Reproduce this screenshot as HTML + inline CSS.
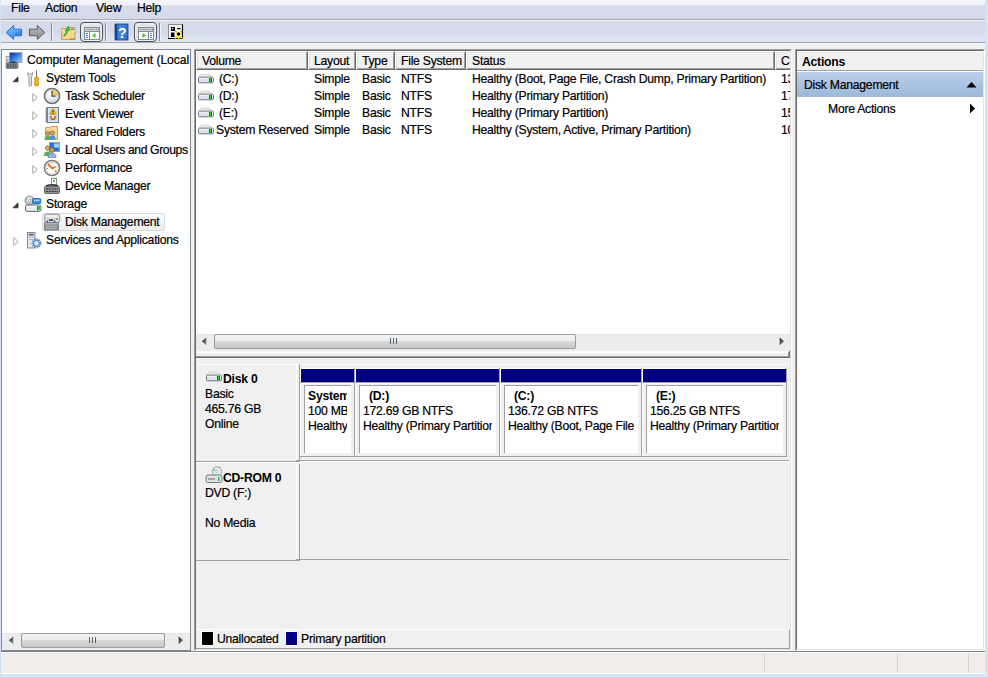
<!DOCTYPE html>
<html><head><meta charset="utf-8">
<style>
*{margin:0;padding:0;box-sizing:border-box}
html,body{width:988px;height:677px;overflow:hidden}
body{position:relative;background:#d6e3f3;font-family:"Liberation Sans",sans-serif;font-size:12.2px;letter-spacing:-0.25px;color:#000}
.a{position:absolute}
.t{position:absolute;white-space:nowrap;line-height:14px;-webkit-text-stroke:0.2px #000}
.b{font-weight:bold;-webkit-text-stroke:0}
</style></head><body>

<!-- menu bar -->
<div class="a" style="left:1px;top:0;width:984px;height:19px;background:linear-gradient(#f5f6fb 0,#eff1f8 5px,#d7dcec 6px,#d5daeb 19px)"></div>
<div class="a" style="left:1px;top:19px;width:984px;height:1px;background:#a9abb0"></div>
<div class="a" style="left:1px;top:20px;width:984px;height:1px;background:#f4f6fb"></div>
<div class="t" style="left:11px;top:1px">File</div>
<div class="t" style="left:45px;top:1px">Action</div>
<div class="t" style="left:96px;top:1px">View</div>
<div class="t" style="left:137px;top:1px">Help</div>

<!-- toolbar -->
<div class="a" style="left:1px;top:21px;width:984px;height:21px;background:linear-gradient(#d6dbec,#d5daeb 55%,#dde1f1 75%,#dfe3f2)"></div>
<div class="a" style="left:1px;top:42px;width:984px;height:1px;background:#a3abbd"></div>
<div class="a" style="left:1px;top:43px;width:984px;height:608px;background:#f0f0f0"></div>


<!-- back -->
<svg class="a" style="left:5px;top:24px" width="18" height="17" viewBox="0 0 18 17">
<defs><linearGradient id="gb" x1="0" y1="0" x2="0" y2="1"><stop offset="0" stop-color="#7cc0fa"/><stop offset="1" stop-color="#3d8fe8"/></linearGradient></defs>
<path d="M1.2 8.5 L8.7 1.5 L8.7 5.2 L16.6 5.2 L16.6 11.8 L8.7 11.8 L8.7 15.3 Z" fill="url(#gb)" stroke="#1e6fd6" stroke-width="1" stroke-linejoin="round"/>
<path d="M10 8.5 L16 6.5 L16 11 L10 11 Z" fill="#2f7fd8" opacity=".7"/>
</svg>
<!-- forward -->
<svg class="a" style="left:28px;top:24px" width="18" height="17" viewBox="0 0 18 17">
<defs><linearGradient id="gf" x1="0" y1="0" x2="0" y2="1"><stop offset="0" stop-color="#b9b9b9"/><stop offset="1" stop-color="#8c8c8c"/></linearGradient></defs>
<path d="M16.8 8.5 L9.3 1.5 L9.3 5.2 L1.4 5.2 L1.4 11.8 L9.3 11.8 L9.3 15.3 Z" fill="url(#gf)" stroke="#5a5a5a" stroke-width="1" stroke-linejoin="round"/>
</svg>
<div class="a" style="left:51px;top:23px;width:1px;height:18px;background:#838b98"></div>
<div class="a" style="left:52px;top:23px;width:1px;height:18px;background:#eef1f8"></div>
<!-- folder up -->
<svg class="a" style="left:60px;top:25px" width="17" height="16" viewBox="0 0 17 16">
<path d="M1.5 3.5 L6 3.5 L7 2.5 L15 2.5 L15 14.5 L1.5 14.5 Z" fill="#f7d58f" stroke="#c9a155" stroke-width="1"/>
<path d="M1.5 6 L15 6" stroke="#fbe6b8" stroke-width="1"/>
<rect x="11" y="3.5" width="3" height="1.5" fill="#3d8fe0"/>
<path d="M3.5 11 L6.5 7 L5 6 L8.5 1 L10 5.5 L8.5 5.5 L5 11 Z" fill="#3fbf3f" stroke="#2a9a2a" stroke-width=".6"/>
<rect x="10" y="13.5" width="5" height="1" fill="#a07a30"/>
</svg>
<!-- pressed button 1 -->
<div class="a" style="left:80px;top:22px;width:23px;height:20px;border:1.5px solid #4f535a;border-radius:4px;background:linear-gradient(#e6e9f0,#dadee7);box-shadow:inset 0 0 0 1px #eef0f5"></div>
<svg class="a" style="left:84px;top:27px" width="16" height="13" viewBox="0 0 16 13">
<rect x=".5" y=".5" width="15" height="12" fill="#fafafa" stroke="#8a8a8a"/>
<rect x="1" y="1" width="14" height="3" fill="#d0d4da"/>
<rect x="2" y="2" width="9" height="1" fill="#9aa0a8"/><rect x="12" y="2" width="1" height="1" fill="#777"/><rect x="14" y="2" width="1" height="1" fill="#777"/>
<rect x="1" y="4" width="14" height="1" fill="#8a8a8a"/>
<rect x="5" y="5" width="1" height="7" fill="#8a8a8a"/>
<rect x="2" y="6" width="2" height="1" fill="#3a8ae0"/><rect x="2" y="8" width="2" height="1" fill="#3a8ae0"/><rect x="2" y="10" width="2" height="1" fill="#3a8ae0"/>
<path d="M8 8.5 L11.5 6 L11.5 11 Z" fill="#3ec23e"/>
</svg>
<div class="a" style="left:105px;top:23px;width:1px;height:18px;background:#838b98"></div>
<div class="a" style="left:106px;top:23px;width:1px;height:18px;background:#eef1f8"></div>
<!-- help -->
<svg class="a" style="left:114px;top:23px" width="15" height="18" viewBox="0 0 15 18">
<defs><linearGradient id="gh" x1="0" y1="0" x2="1" y2="0"><stop offset="0" stop-color="#1c4fa8"/><stop offset=".4" stop-color="#4b8be0"/><stop offset="1" stop-color="#2f6fd0"/></linearGradient></defs>
<rect x="1" y="1" width="13" height="16" fill="url(#gh)" stroke="#173f8a" stroke-width=".8"/>
<rect x="1" y="1" width="2" height="16" fill="#173f8a"/>
<text x="8.2" y="14.5" font-family="Liberation Sans" font-size="14" font-weight="bold" fill="#fff" text-anchor="middle">?</text>
</svg>
<!-- pressed button 2 -->
<div class="a" style="left:134px;top:22px;width:23px;height:20px;border:1.5px solid #4f535a;border-radius:4px;background:linear-gradient(#e6e9f0,#dadee7);box-shadow:inset 0 0 0 1px #eef0f5"></div>
<svg class="a" style="left:138px;top:27px" width="16" height="13" viewBox="0 0 16 13">
<rect x=".5" y=".5" width="15" height="12" fill="#fafafa" stroke="#8a8a8a"/>
<rect x="1" y="1" width="14" height="3" fill="#d0d4da"/>
<rect x="2" y="2" width="9" height="1" fill="#9aa0a8"/><rect x="12" y="2" width="1" height="1" fill="#777"/><rect x="14" y="2" width="1" height="1" fill="#777"/>
<rect x="1" y="4" width="14" height="1" fill="#8a8a8a"/>
<rect x="10" y="5" width="1" height="7" fill="#8a8a8a"/>
<rect x="12" y="6" width="2" height="1" fill="#3a8ae0"/><rect x="12" y="8" width="2" height="1" fill="#3a8ae0"/><rect x="12" y="10" width="2" height="1" fill="#3a8ae0"/>
<path d="M4.5 6 L8 8.5 L4.5 11 Z" fill="#3ec23e"/>
</svg>
<div class="a" style="left:159px;top:23px;width:1px;height:18px;background:#838b98"></div>
<div class="a" style="left:160px;top:23px;width:1px;height:18px;background:#eef1f8"></div>
<!-- properties -->
<svg class="a" style="left:167px;top:23px" width="18" height="18" viewBox="0 0 18 18">
<rect x="1.5" y="1.5" width="14" height="14" fill="#fff" stroke="#8c8c8c"/>
<path d="M1 15.5 H16 M15.5 1.5 V16" stroke="#000" stroke-width="1.1"/>
<rect x="3" y="3" width="11" height="11" fill="none" stroke="#d2d2d2" stroke-width=".8"/>
<rect x="4" y="4" width="4" height="4" fill="#000"/><rect x="5" y="5" width="1.2" height="1.2" fill="#fff"/>
<rect x="10" y="5" width="3.5" height="1.3" fill="#000"/>
<rect x="4" y="9.5" width="3.5" height="4.5" fill="#000"/>
<circle cx="11.5" cy="11" r="1.8" fill="#000"/>
<path d="M8.3 8 L10.3 10 M15 8 L13 10 M11.5 13 V17 M8 15.5 L10.3 13 M15.5 15.5 L13 13" stroke="#f5e020" stroke-width="1.4"/>
<path d="M8.3 8 L9.3 9 M15 8 L14 9" stroke="#b08a20" stroke-width="1.4"/>
</svg>


<!-- left tree panel -->
<div class="a" style="left:1px;top:49px;width:190px;height:602px;border:1px solid #828790;background:#fff"></div>
<div class="a" style="left:2px;top:50px;width:188px;height:600px;overflow:hidden"><div class="a" style="left:-2px;top:-50px;width:988px;height:677px">
<svg class="a" style="left:5px;top:51px" width="18" height="18" viewBox="0 0 18 18">
<defs><linearGradient id="gscr" x1="0" y1="0" x2="1" y2="1"><stop offset="0" stop-color="#0a2a9a"/><stop offset=".45" stop-color="#2f7ae0"/><stop offset="1" stop-color="#9fd4f8"/></linearGradient></defs>
<rect x="4.5" y="1.5" width="12.5" height="10" fill="url(#gscr)" stroke="#a4a8ae" stroke-width="1"/>
<rect x="1" y="5.5" width="3.5" height="6" fill="#d4d8dc" stroke="#8a8e94" stroke-width=".7"/>
<rect x="2" y="8.5" width="1.3" height="1.3" fill="#3c3"/>
<path d="M4 12.5 Q8 10.3 11.5 12" stroke="#2a2a2a" stroke-width="1.4" fill="none"/>
<rect x="1" y="12" width="12" height="5.5" rx=".8" fill="#8a8e94" stroke="#5a5e64" stroke-width=".6"/>
<path d="M2.2 14 H12 M2.2 16 H12" stroke="#222" stroke-width=".9" stroke-dasharray="1.6 .9"/>
</svg><div class="t" style="left:27px;top:53px;letter-spacing:-0.1px">Computer Management (Local</div>
<svg class="a" style="left:12px;top:76px" width="7" height="7" viewBox="0 0 7 7"><path d="M6 0.8 L6 5.8 L1 5.8 Z" fill="#3a3a3a" stroke="#2a2a2a" stroke-width=".7" stroke-linejoin="round"/></svg>
<svg class="a" style="left:26px;top:70px" width="14" height="17" viewBox="0 0 14 17">
<path d="M2 2.5 Q1 5 3 6.5 L3 15.5 Q4.2 16.5 5.4 15.5 L5.4 6.5 Q7.5 5 6.5 2.5 L5.4 4 L3.5 4 Z" fill="#eaeaea" stroke="#8a8a8a" stroke-width=".9"/>
<rect x="10" y="0.5" width="1" height="7" fill="#6a6a6a"/>
<path d="M8.6 7.5 H12.4 V10 H11.6 V11 H12.4 V15.5 Q10.5 16.8 8.6 15.5 V11 H9.4 V10 H8.6 Z" fill="#f2b51a" stroke="#c5861a" stroke-width=".7"/>
</svg><div class="t" style="left:46px;top:71px">System Tools</div>
<svg class="a" style="left:32px;top:93px" width="7" height="10" viewBox="0 0 7 10"><path d="M0.8 0.6 L5.2 4.6 L0.8 8.6 Z" fill="#fff" stroke="#a6a6a6" stroke-width="1" stroke-linejoin="miter"/></svg>
<svg class="a" style="left:43px;top:87px" width="18" height="18" viewBox="0 0 18 18">
<defs><radialGradient id="gc" cx=".4" cy=".35" r=".7"><stop offset="0" stop-color="#fff"/><stop offset="1" stop-color="#cdd6e3"/></radialGradient></defs>
<circle cx="9" cy="9" r="7.6" fill="url(#gc)" stroke="#6c7076" stroke-width="1.5"/><circle cx="9" cy="9" r="6.2" fill="none" stroke="#b8bec8" stroke-width=".6" stroke-dasharray=".8 1.2"/>
<path d="M9 9 L9 2.4 A6.6 6.6 0 0 1 15.4 9 Z" fill="#f5c860"/>
<path d="M9 3.8 V9.2 H12.5" stroke="#3e4654" stroke-width="1.2" fill="none"/>
</svg><div class="t" style="left:65px;top:89px">Task Scheduler</div>
<svg class="a" style="left:32px;top:111px" width="7" height="10" viewBox="0 0 7 10"><path d="M0.8 0.6 L5.2 4.6 L0.8 8.6 Z" fill="#fff" stroke="#a6a6a6" stroke-width="1" stroke-linejoin="miter"/></svg>
<svg class="a" style="left:44px;top:106px" width="16" height="17" viewBox="0 0 16 17">
<rect x="3" y="1.5" width="11.5" height="15" fill="#dfe6f3" stroke="#5c6a80" stroke-width=".9"/>
<path d="M5 4 H13 M5 6 H13 M5 8 H13 M5 10 H13 M5 12 H13 M5 14 H13" stroke="#aab6ca" stroke-width=".6"/>
<path d="M1.5 3 H4 M1.5 5 H4 M1.5 7 H4 M1.5 9 H4 M1.5 11 H4 M1.5 13 H4 M1.5 15 H4" stroke="#444c58" stroke-width=".9"/>
<path d="M9 2.2 L12.3 8.3 L5.7 8.3 Z" fill="#f5c518" stroke="#b88a10" stroke-width=".6"/>
<rect x="8.5" y="4.2" width="1" height="2.2" fill="#222"/><rect x="8.5" y="6.9" width="1" height="1" fill="#222"/>
<path d="M6.3 10.5 H11.7 L10.8 13.5 H7.2 Z" fill="#e87a30" stroke="#9a4a1a" stroke-width=".6"/>
<circle cx="9" cy="10.8" r="1.3" fill="#fff2d0"/>
</svg><div class="t" style="left:65px;top:107px">Event Viewer</div>
<svg class="a" style="left:32px;top:129px" width="7" height="10" viewBox="0 0 7 10"><path d="M0.8 0.6 L5.2 4.6 L0.8 8.6 Z" fill="#fff" stroke="#a6a6a6" stroke-width="1" stroke-linejoin="miter"/></svg>
<svg class="a" style="left:43px;top:125px" width="16" height="16" viewBox="0 0 16 16">
<path d="M2.5 2.5 H7 L8 1.5 H14.5 V14.5 H2.5 Z" fill="#f7d68e" stroke="#c9a155" stroke-width="1"/>
<circle cx="5" cy="8.5" r="2" fill="#d9a470" stroke="#6b4a30" stroke-width=".6"/><path d="M1.5 15 Q1.5 11 5 11 Q8.5 11 8.5 15 Z" fill="#52b552"/>
<circle cx="9.5" cy="8" r="2" fill="#d9a470" stroke="#6b4a30" stroke-width=".6"/><path d="M6.5 14.5 Q6.5 10.5 9.5 10.5 Q12.5 10.5 12.5 14.5 Z" fill="#4a90e0"/>
</svg><div class="t" style="left:65px;top:125px">Shared Folders</div>
<svg class="a" style="left:32px;top:147px" width="7" height="10" viewBox="0 0 7 10"><path d="M0.8 0.6 L5.2 4.6 L0.8 8.6 Z" fill="#fff" stroke="#a6a6a6" stroke-width="1" stroke-linejoin="miter"/></svg>
<svg class="a" style="left:43px;top:141px" width="18" height="17" viewBox="0 0 18 17">
<rect x="6.5" y="1.5" width="10" height="9" fill="#2d72d2" stroke="#9aa2ac"/>
<rect x="11" y="2.5" width="5" height="4" fill="#9fd2f8"/>
<circle cx="4.5" cy="7" r="2.2" fill="#e0b060" stroke="#6b4a30" stroke-width=".6"/><path d="M0.8 15 Q0.8 10.5 4.5 10.5 Q7.5 10.5 8 13 V15 Z" fill="#52b552"/>
<circle cx="9" cy="9" r="2.4" fill="#caa070" stroke="#5a3a20" stroke-width=".6"/><path d="M5 16.5 Q5 12 9 12 Q13 12 13 16.5 Z" fill="#8fb4e0" stroke="#5a7aa8" stroke-width=".6"/>
</svg><div class="t" style="left:65px;top:143px;letter-spacing:-0.4px">Local Users and Groups</div>
<svg class="a" style="left:32px;top:165px" width="7" height="10" viewBox="0 0 7 10"><path d="M0.8 0.6 L5.2 4.6 L0.8 8.6 Z" fill="#fff" stroke="#a6a6a6" stroke-width="1" stroke-linejoin="miter"/></svg>
<svg class="a" style="left:43px;top:159px" width="18" height="18" viewBox="0 0 18 18">
<circle cx="9" cy="9" r="7.6" fill="#fafafa" stroke="#7c7c7c" stroke-width="1.5"/>
<circle cx="9" cy="9" r="5.8" fill="none" stroke="#d8d8d8" stroke-width=".8"/>
<path d="M5 5 L9.5 9.5 L12.5 7.5" stroke="#e8741a" stroke-width="2" fill="none"/>
<path d="M12 11.5 L13.5 13" stroke="#e8741a" stroke-width="1.5"/>
<path d="M3.5 9.5 H5 M9 3.5 V4.5" stroke="#777" stroke-width=".8"/>
</svg><div class="t" style="left:65px;top:161px">Performance</div>
<svg class="a" style="left:43px;top:177px" width="18" height="18" viewBox="0 0 18 18">
<rect x="8.5" y="1.5" width="5" height="7" fill="#fff" stroke="#8a8a8a"/>
<rect x="10" y="3" width="2" height="2" fill="#4ac04a"/>
<path d="M3 9 Q9 6.5 15 9" stroke="#333" stroke-width="1.6" fill="none"/>
<rect x="1.5" y="9.5" width="15" height="7" rx="1" fill="#8e9298" stroke="#4e5258" stroke-width=".8"/>
<path d="M3 12 H15 M3 14.5 H15" stroke="#2a2a2a" stroke-width=".9" stroke-dasharray="2 .8"/>
</svg><div class="t" style="left:65px;top:179px">Device Manager</div>
<svg class="a" style="left:12px;top:202px" width="7" height="7" viewBox="0 0 7 7"><path d="M6 0.8 L6 5.8 L1 5.8 Z" fill="#3a3a3a" stroke="#2a2a2a" stroke-width=".7" stroke-linejoin="round"/></svg>
<svg class="a" style="left:24px;top:195px" width="18" height="18" viewBox="0 0 18 18">
<defs><radialGradient id="gdisc" cx=".45" cy=".4" r=".6"><stop offset="0" stop-color="#f4f4f4"/><stop offset="1" stop-color="#a8acb2"/></radialGradient></defs>
<circle cx="5.5" cy="5.5" r="4.6" fill="url(#gdisc)" stroke="#7c8086" stroke-width=".7"/>
<circle cx="5.5" cy="5.5" r="1.1" fill="#fff" stroke="#777" stroke-width=".5"/>
<rect x="1.6" y="3.6" width="1.2" height="1.2" fill="#4c4"/>
<rect x="8.6" y="3.5" width="8.2" height="5.2" rx="1.2" fill="#2f86e8" stroke="#1656b0" stroke-width=".7"/>
<rect x="10" y="4.6" width="5.5" height="1.6" fill="#9cd0fa"/>
<rect x="1.5" y="10" width="15.4" height="6.4" rx="1.6" fill="#e6eaf2" stroke="#62666e" stroke-width="1"/>
<rect x="2.4" y="10.9" width="13.6" height="1" fill="#fafbfd"/>
<rect x="13" y="11.2" width="2.6" height="4" fill="#3a3e48"/><rect x="13.6" y="11.4" width="1.4" height="3.6" fill="#28e028"/>
</svg><div class="t" style="left:46px;top:197px">Storage</div>
<div class="a" style="left:42px;top:213px;width:123px;height:18px;border:1px solid #d9d9d9;border-radius:2px;background:linear-gradient(#fafafa,#ececec)"></div>
<svg class="a" style="left:44px;top:213px" width="17" height="18" viewBox="0 0 17 18">
<rect x=".7" y="1.2" width="15" height="8.3" rx="2" fill="#dde1e6" stroke="#7e838a" stroke-width=".9"/>
<rect x="2.2" y="2.4" width="11" height="1.3" fill="#fafafa"/>
<rect x="4.8" y="6.4" width="4.6" height="1.3" fill="#111"/>
<circle cx="3.4" cy="8.3" r=".85" fill="#1a3fc0"/><circle cx="10.6" cy="8.3" r=".85" fill="#1a3fc0"/>
<rect x="12" y="5.2" width="1.6" height="1.6" fill="#36c436" stroke="#c08040" stroke-width=".4"/>
<rect x=".7" y="10" width="13.6" height="7" fill="#8d9198" stroke="#5d6168" stroke-width=".7"/>
<rect x="1.5" y="10.3" width="12" height="1" fill="#c8ccd2"/>
<path d="M2.2 13.3 H13 M2.2 15.6 H13" stroke="#e2e2e2" stroke-width=".8" stroke-dasharray="1.4 .7"/>
</svg><div class="t" style="left:65px;top:215px">Disk Management</div>
<svg class="a" style="left:13px;top:237px" width="7" height="10" viewBox="0 0 7 10"><path d="M0.8 0.6 L5.2 4.6 L0.8 8.6 Z" fill="#fff" stroke="#a6a6a6" stroke-width="1" stroke-linejoin="miter"/></svg>
<svg class="a" style="left:26px;top:231px" width="16" height="18" viewBox="0 0 16 18">
<rect x="1.5" y="1.5" width="7.5" height="15.5" fill="#e4e7ec" stroke="#7a7e86" stroke-width=".9"/>
<rect x="2.8" y="2.8" width="5" height="1.6" fill="#4a5a78"/><rect x="2.8" y="5.5" width="5" height="1" fill="#b0b4ba"/><rect x="2.8" y="8" width="5" height="1" fill="#b0b4ba"/>
<circle cx="10.5" cy="12.3" r="4.2" fill="none" stroke="#5a90d0" stroke-width="1.8" stroke-dasharray="1.4 1"/>
<circle cx="10.5" cy="12.3" r="3.2" fill="#a8c8ee" stroke="#3a6ab0" stroke-width=".7"/>
<circle cx="10.5" cy="12.3" r="1.3" fill="#fff"/>
</svg><div class="t" style="left:46px;top:233px">Services and Applications</div>
</div></div>
<div class="a" style="left:2px;top:633px;width:188px;height:17px;background:#ececec;border-top:1px solid #e4e4e4"></div>
<svg class="a" style="left:8px;top:636px" width="7" height="9" viewBox="0 0 7 9"><defs><linearGradient id="gal" x1="0" y1="0" x2="1" y2="1"><stop offset="0" stop-color="#1a1a1a"/><stop offset="1" stop-color="#9aa0a8"/></linearGradient></defs><path d="M5.3 0.6 L0.8 4.3 L5.3 8.2 Z" fill="url(#gal)"/></svg>
<div class="a" style="left:21px;top:633px;width:144px;height:15px;border:1px solid #9a9a9a;border-radius:2px;background:linear-gradient(#f4f4f4 0,#ececec 45%,#d9d9d9 50%,#c8c8c8 100%)"></div>
<div class="a" style="left:89px;top:637px;width:1px;height:6px;background:#56606e"></div>
<div class="a" style="left:92px;top:637px;width:1px;height:6px;background:#56606e"></div>
<div class="a" style="left:95px;top:637px;width:1px;height:6px;background:#56606e"></div>
<svg class="a" style="left:177px;top:636px" width="7" height="9" viewBox="0 0 7 9"><defs><linearGradient id="gar" x1="0" y1="0" x2="1" y2="1"><stop offset="0" stop-color="#1a1a1a"/><stop offset="1" stop-color="#9aa0a8"/></linearGradient></defs><path d="M1.7 0.6 L6.2 4.3 L1.7 8.2 Z" fill="url(#gar)"/></svg>

<!-- middle panel -->
<div class="a" style="left:194px;top:49px;width:598px;height:602px;border-left:1px solid #a0a0a0;border-top:1px solid #a0a0a0;border-right:1px solid #fff;border-bottom:1px solid #fff"></div>
<div class="a" style="left:195px;top:50px;width:596px;height:600px;border-left:1px solid #696969;border-top:1px solid #696969;border-right:1px solid #e3e3e3;border-bottom:1px solid #e3e3e3;background:#f0f0f0"></div>
<div class="a" style="left:196px;top:51px;width:594px;height:19px;overflow:hidden"><div class="a" style="left:0px;top:0;width:112px;height:19px;background:#f0f0f0;border-left:1px solid #fff;border-top:1px solid #fff;border-right:1px solid #696969;border-bottom:1px solid #696969"><div class="a" style="left:0;top:0;right:0;bottom:0;border-left:1px solid #e3e3e3;border-top:1px solid #e3e3e3;border-right:1px solid #a0a0a0;border-bottom:1px solid #a0a0a0"></div><div class="t" style="left:5px;top:2px">Volume</div></div><div class="a" style="left:112px;top:0;width:48px;height:19px;background:#f0f0f0;border-left:1px solid #fff;border-top:1px solid #fff;border-right:1px solid #696969;border-bottom:1px solid #696969"><div class="a" style="left:0;top:0;right:0;bottom:0;border-left:1px solid #e3e3e3;border-top:1px solid #e3e3e3;border-right:1px solid #a0a0a0;border-bottom:1px solid #a0a0a0"></div><div class="t" style="left:5px;top:2px">Layout</div></div><div class="a" style="left:160px;top:0;width:39px;height:19px;background:#f0f0f0;border-left:1px solid #fff;border-top:1px solid #fff;border-right:1px solid #696969;border-bottom:1px solid #696969"><div class="a" style="left:0;top:0;right:0;bottom:0;border-left:1px solid #e3e3e3;border-top:1px solid #e3e3e3;border-right:1px solid #a0a0a0;border-bottom:1px solid #a0a0a0"></div><div class="t" style="left:5px;top:2px">Type</div></div><div class="a" style="left:199px;top:0;width:71px;height:19px;background:#f0f0f0;border-left:1px solid #fff;border-top:1px solid #fff;border-right:1px solid #696969;border-bottom:1px solid #696969"><div class="a" style="left:0;top:0;right:0;bottom:0;border-left:1px solid #e3e3e3;border-top:1px solid #e3e3e3;border-right:1px solid #a0a0a0;border-bottom:1px solid #a0a0a0"></div><div class="t" style="left:5px;top:2px">File System</div></div><div class="a" style="left:270px;top:0;width:309px;height:19px;background:#f0f0f0;border-left:1px solid #fff;border-top:1px solid #fff;border-right:1px solid #696969;border-bottom:1px solid #696969"><div class="a" style="left:0;top:0;right:0;bottom:0;border-left:1px solid #e3e3e3;border-top:1px solid #e3e3e3;border-right:1px solid #a0a0a0;border-bottom:1px solid #a0a0a0"></div><div class="t" style="left:5px;top:2px">Status</div></div><div class="a" style="left:579px;top:0;width:66px;height:19px;background:#f0f0f0;border-left:1px solid #fff;border-top:1px solid #fff;border-right:1px solid #696969;border-bottom:1px solid #696969"><div class="a" style="left:0;top:0;right:0;bottom:0;border-left:1px solid #e3e3e3;border-top:1px solid #e3e3e3;border-right:1px solid #a0a0a0;border-bottom:1px solid #a0a0a0"></div><div class="t" style="left:5px;top:2px">C</div></div></div>
<div class="a" style="left:196px;top:70px;width:594px;height:264px;background:#fff;overflow:hidden">
<svg class="a" style="left:1px;top:3px" width="17" height="11" viewBox="0 0 17 11"><path d="M4.5 1.2 H12.5 L15.5 4.2 H1.5 Z" fill="#ececec" stroke="#c4c4c4" stroke-width=".7"/><rect x="1.5" y="4.2" width="15" height="5.6" rx="1.2" fill="#dde2f1" stroke="#6d727c" stroke-width="1"/><rect x="2.2" y="4.8" width="13.6" height="1" fill="#f4f6fa"/><rect x="12" y="5" width="3" height="4" fill="#3a3e48"/><rect x="12.8" y="5.2" width="1.4" height="3.6" fill="#28e028"/></svg><div class="t" style="left:23px;top:2px">(C:)</div><div class="t" style="left:118px;top:2px">Simple</div><div class="t" style="left:166px;top:2px">Basic</div><div class="t" style="left:205px;top:2px">NTFS</div><div class="t" style="left:276px;top:2px">Healthy (Boot, Page File, Crash Dump, Primary Partition)</div><div class="t" style="left:585px;top:2px">136</div>
<svg class="a" style="left:1px;top:20px" width="17" height="11" viewBox="0 0 17 11"><path d="M4.5 1.2 H12.5 L15.5 4.2 H1.5 Z" fill="#ececec" stroke="#c4c4c4" stroke-width=".7"/><rect x="1.5" y="4.2" width="15" height="5.6" rx="1.2" fill="#dde2f1" stroke="#6d727c" stroke-width="1"/><rect x="2.2" y="4.8" width="13.6" height="1" fill="#f4f6fa"/><rect x="12" y="5" width="3" height="4" fill="#3a3e48"/><rect x="12.8" y="5.2" width="1.4" height="3.6" fill="#28e028"/></svg><div class="t" style="left:23px;top:19px">(D:)</div><div class="t" style="left:118px;top:19px">Simple</div><div class="t" style="left:166px;top:19px">Basic</div><div class="t" style="left:205px;top:19px">NTFS</div><div class="t" style="left:276px;top:19px">Healthy (Primary Partition)</div><div class="t" style="left:585px;top:19px">172</div>
<svg class="a" style="left:1px;top:37px" width="17" height="11" viewBox="0 0 17 11"><path d="M4.5 1.2 H12.5 L15.5 4.2 H1.5 Z" fill="#ececec" stroke="#c4c4c4" stroke-width=".7"/><rect x="1.5" y="4.2" width="15" height="5.6" rx="1.2" fill="#dde2f1" stroke="#6d727c" stroke-width="1"/><rect x="2.2" y="4.8" width="13.6" height="1" fill="#f4f6fa"/><rect x="12" y="5" width="3" height="4" fill="#3a3e48"/><rect x="12.8" y="5.2" width="1.4" height="3.6" fill="#28e028"/></svg><div class="t" style="left:23px;top:36px">(E:)</div><div class="t" style="left:118px;top:36px">Simple</div><div class="t" style="left:166px;top:36px">Basic</div><div class="t" style="left:205px;top:36px">NTFS</div><div class="t" style="left:276px;top:36px">Healthy (Primary Partition)</div><div class="t" style="left:585px;top:36px">156</div>
<svg class="a" style="left:1px;top:54px" width="17" height="11" viewBox="0 0 17 11"><path d="M4.5 1.2 H12.5 L15.5 4.2 H1.5 Z" fill="#ececec" stroke="#c4c4c4" stroke-width=".7"/><rect x="1.5" y="4.2" width="15" height="5.6" rx="1.2" fill="#dde2f1" stroke="#6d727c" stroke-width="1"/><rect x="2.2" y="4.8" width="13.6" height="1" fill="#f4f6fa"/><rect x="12" y="5" width="3" height="4" fill="#3a3e48"/><rect x="12.8" y="5.2" width="1.4" height="3.6" fill="#28e028"/></svg><div class="t" style="left:20px;top:53px">System Reserved</div><div class="t" style="left:118px;top:53px">Simple</div><div class="t" style="left:166px;top:53px">Basic</div><div class="t" style="left:205px;top:53px">NTFS</div><div class="t" style="left:276px;top:53px">Healthy (System, Active, Primary Partition)</div><div class="t" style="left:585px;top:53px">100</div>
</div>
<div class="a" style="left:196px;top:334px;width:594px;height:17px;background:#ececec;border-top:1px solid #e4e4e4"></div>
<svg class="a" style="left:201px;top:337px" width="7" height="9" viewBox="0 0 7 9"><defs><linearGradient id="gal" x1="0" y1="0" x2="1" y2="1"><stop offset="0" stop-color="#1a1a1a"/><stop offset="1" stop-color="#9aa0a8"/></linearGradient></defs><path d="M5.3 0.6 L0.8 4.3 L5.3 8.2 Z" fill="url(#gal)"/></svg>
<div class="a" style="left:214px;top:334px;width:362px;height:15px;border:1px solid #9a9a9a;border-radius:2px;background:linear-gradient(#f4f4f4 0,#ececec 45%,#d9d9d9 50%,#c8c8c8 100%)"></div>
<div class="a" style="left:390px;top:338px;width:1px;height:6px;background:#56606e"></div>
<div class="a" style="left:393px;top:338px;width:1px;height:6px;background:#56606e"></div>
<div class="a" style="left:396px;top:338px;width:1px;height:6px;background:#56606e"></div>
<svg class="a" style="left:778px;top:337px" width="7" height="9" viewBox="0 0 7 9"><defs><linearGradient id="gar" x1="0" y1="0" x2="1" y2="1"><stop offset="0" stop-color="#1a1a1a"/><stop offset="1" stop-color="#9aa0a8"/></linearGradient></defs><path d="M1.7 0.6 L6.2 4.3 L1.7 8.2 Z" fill="url(#gar)"/></svg>
<div class="a" style="left:196px;top:351px;width:594px;height:1px;background:#f8f8f8"></div>
<div class="a" style="left:196px;top:352px;width:594px;height:1px;background:#fff"></div>

<div class="a" style="left:196px;top:356px;width:594px;height:1px;background:#a0a0a0"></div>
<div class="a" style="left:196px;top:357px;width:594px;height:1px;background:#696969"></div>
<div class="a" style="left:788px;top:352px;width:1px;height:5px;background:#a0a0a0"></div>
<div class="a" style="left:789px;top:351px;width:1px;height:6px;background:#696969"></div>
<div class="a" style="left:196px;top:358px;width:594px;height:1px;background:#f8f8f8"></div>
<div class="a" style="left:197px;top:364px;width:592px;height:1px;background:#fff"></div>
<div class="a" style="left:296px;top:364px;width:1px;height:96px;background:#fff"></div>
<div class="a" style="left:299px;top:364px;width:1px;height:98px;background:#a0a0a0"></div>
<div class="a" style="left:196px;top:461px;width:104px;height:1px;background:#a0a0a0"></div>
<div class="a" style="left:197px;top:462px;width:103px;height:1px;background:#fff"></div>
<div class="a" style="left:296px;top:460px;width:493px;height:1px;background:#a0a0a0"></div>
<div class="a" style="left:300px;top:461px;width:489px;height:1px;background:#fff"></div>
<div class="a" style="left:296px;top:464px;width:1px;height:95px;background:#fff"></div>
<div class="a" style="left:299px;top:464px;width:1px;height:97px;background:#a0a0a0"></div>
<div class="a" style="left:196px;top:560px;width:104px;height:1px;background:#a0a0a0"></div>
<div class="a" style="left:296px;top:559px;width:493px;height:1px;background:#a0a0a0"></div>
<div class="a" style="left:300px;top:368px;width:54px;height:1px;background:#fff"></div><div class="a" style="left:300px;top:368px;width:1px;height:88px;background:#fff"></div><div class="a" style="left:301px;top:369px;width:53px;height:13px;background:#000080"></div><div class="a" style="left:300px;top:382px;width:55px;height:1px;background:#a0a0a0"></div><div class="a" style="left:301px;top:383px;width:53px;height:1px;background:#fff"></div><div class="a" style="left:354px;top:368px;width:1px;height:89px;background:#a0a0a0"></div><div class="a" style="left:300px;top:456px;width:55px;height:1px;background:#a0a0a0"></div><div class="a" style="left:304px;top:385px;width:47px;height:68px;background:#fff;border-left:1px solid #a0a0a0;border-top:1px solid #a0a0a0;overflow:hidden"><div class="a" style="left:0;top:0;width:42px;height:60px;overflow:hidden"><div class="t b" style="left:3px;top:3px">System</div><div class="t" style="left:3px;top:18px">100 MB</div><div class="t" style="left:3px;top:33px">Healthy</div></div></div>
<div class="a" style="left:355px;top:368px;width:144px;height:1px;background:#fff"></div><div class="a" style="left:355px;top:368px;width:1px;height:88px;background:#fff"></div><div class="a" style="left:356px;top:369px;width:143px;height:13px;background:#000080"></div><div class="a" style="left:355px;top:382px;width:145px;height:1px;background:#a0a0a0"></div><div class="a" style="left:356px;top:383px;width:143px;height:1px;background:#fff"></div><div class="a" style="left:499px;top:368px;width:1px;height:89px;background:#a0a0a0"></div><div class="a" style="left:355px;top:456px;width:145px;height:1px;background:#a0a0a0"></div><div class="a" style="left:359px;top:385px;width:137px;height:68px;background:#fff;border-left:1px solid #a0a0a0;border-top:1px solid #a0a0a0;overflow:hidden"><div class="a" style="left:0;top:0;width:132px;height:60px;overflow:hidden"><div class="t b" style="left:9px;top:3px">(D:)</div><div class="t" style="left:3px;top:18px">172.69 GB NTFS</div><div class="t" style="left:3px;top:33px">Healthy (Primary Partition)</div></div></div>
<div class="a" style="left:500px;top:368px;width:141px;height:1px;background:#fff"></div><div class="a" style="left:500px;top:368px;width:1px;height:88px;background:#fff"></div><div class="a" style="left:501px;top:369px;width:140px;height:13px;background:#000080"></div><div class="a" style="left:500px;top:382px;width:142px;height:1px;background:#a0a0a0"></div><div class="a" style="left:501px;top:383px;width:140px;height:1px;background:#fff"></div><div class="a" style="left:641px;top:368px;width:1px;height:89px;background:#a0a0a0"></div><div class="a" style="left:500px;top:456px;width:142px;height:1px;background:#a0a0a0"></div><div class="a" style="left:504px;top:385px;width:134px;height:68px;background:#fff;border-left:1px solid #a0a0a0;border-top:1px solid #a0a0a0;overflow:hidden"><div class="a" style="left:0;top:0;width:129px;height:60px;overflow:hidden"><div class="t b" style="left:9px;top:3px">(C:)</div><div class="t" style="left:3px;top:18px">136.72 GB NTFS</div><div class="t" style="left:3px;top:33px">Healthy (Boot, Page File, Crash Dump, Primary Partition)</div></div></div>
<div class="a" style="left:642px;top:368px;width:144px;height:1px;background:#fff"></div><div class="a" style="left:642px;top:368px;width:1px;height:88px;background:#fff"></div><div class="a" style="left:643px;top:369px;width:143px;height:13px;background:#000080"></div><div class="a" style="left:642px;top:382px;width:145px;height:1px;background:#a0a0a0"></div><div class="a" style="left:643px;top:383px;width:143px;height:1px;background:#fff"></div><div class="a" style="left:786px;top:368px;width:1px;height:89px;background:#a0a0a0"></div><div class="a" style="left:642px;top:456px;width:145px;height:1px;background:#a0a0a0"></div><div class="a" style="left:646px;top:385px;width:137px;height:68px;background:#fff;border-left:1px solid #a0a0a0;border-top:1px solid #a0a0a0;overflow:hidden"><div class="a" style="left:0;top:0;width:132px;height:60px;overflow:hidden"><div class="t b" style="left:9px;top:3px">(E:)</div><div class="t" style="left:3px;top:18px">156.25 GB NTFS</div><div class="t" style="left:3px;top:33px">Healthy (Primary Partition)</div></div></div>
<svg class="a" style="left:205px;top:371px" width="17" height="11" viewBox="0 0 17 11"><path d="M4.5 1.2 H12.5 L15.5 4.2 H1.5 Z" fill="#ececec" stroke="#c4c4c4" stroke-width=".7"/><rect x="1.5" y="4.2" width="15" height="5.6" rx="1.2" fill="#dde2f1" stroke="#6d727c" stroke-width="1"/><rect x="2.2" y="4.8" width="13.6" height="1" fill="#f4f6fa"/><rect x="12" y="5" width="3" height="4" fill="#3a3e48"/><rect x="12.8" y="5.2" width="1.4" height="3.6" fill="#28e028"/></svg><div class="t b" style="left:223px;top:372px">Disk 0</div><div class="t" style="left:205px;top:387px">Basic</div><div class="t" style="left:205px;top:402px">465.76 GB</div><div class="t" style="left:205px;top:417px">Online</div>
<svg class="a" style="left:205px;top:466px" width="18" height="18" viewBox="0 0 18 18">
<circle cx="12" cy="5.5" r="4.8" fill="#e4e8ee" stroke="#9aa0a8" stroke-width=".8"/>
<circle cx="12" cy="5.5" r="1.3" fill="#fff" stroke="#999" stroke-width=".5"/>
<rect x="8.5" y="3" width="1.5" height="1.5" fill="#3c3"/><rect x="14" y="1" width="1" height="1" fill="#d0d"/>
<path d="M1 11 Q1 9 3 9 L15 9 Q17 9 17 11 L17 15 Q17 16.5 15.5 16.5 L2.5 16.5 Q1 16.5 1 15 Z" fill="#dfe3ea" stroke="#6e7176" stroke-width=".9"/>
<path d="M3 13 H10" stroke="#777" stroke-width="1.2"/><rect x="13" y="11" width="1.5" height="4" fill="#2fc02f"/>
</svg><div class="t b" style="left:223px;top:471px">CD-ROM 0</div><div class="t" style="left:205px;top:486px">DVD (F:)</div><div class="t" style="left:205px;top:516px">No Media</div>
<div class="a" style="left:196px;top:629px;width:594px;height:20px;background:#f0f0f0;border-top:1px solid #fff;border-right:1px solid #a0a0a0;border-bottom:1px solid #a0a0a0"></div>
<div class="a" style="left:201px;top:631px;width:13px;height:15px;border:1px solid #fff;background:#000"></div>
<div class="t" style="left:217px;top:632px">Unallocated</div>
<div class="a" style="left:285px;top:631px;width:13px;height:15px;border:1px solid #fff;background:#000080"></div>
<div class="t" style="left:301px;top:632px">Primary partition</div>


<!-- actions panel -->
<div class="a" style="left:795px;top:49px;width:190px;height:602px;border-left:1px solid #a0a0a0;border-top:1px solid #a0a0a0;border-right:1px solid #fff;border-bottom:1px solid #fff"></div>
<div class="a" style="left:796px;top:50px;width:188px;height:600px;border-left:1px solid #696969;border-top:1px solid #696969;border-right:1px solid #e3e3e3;border-bottom:1px solid #e3e3e3;background:#fff"></div>
<div class="a" style="left:797px;top:51px;width:186px;height:19px;background:#f0f0f0;border-top:1px solid #fff"></div>
<div class="a" style="left:797px;top:70px;width:186px;height:1px;background:#a0a0a0"></div>
<div class="a" style="left:797px;top:71px;width:186px;height:1px;background:#fff"></div>
<div class="t b" style="left:802px;top:55px">Actions</div>
<div class="a" style="left:797px;top:72px;width:186px;height:25px;background:linear-gradient(#bad0ea,#abc4e2 50%,#9db8d9)"></div>
<div class="t" style="left:804px;top:78px">Disk Management</div>
<svg class="a" style="left:966px;top:81px" width="11" height="7" viewBox="0 0 11 7"><path d="M0.5 6.5 L5.5 1 L10.5 6.5 Z" fill="#000"/></svg>
<div class="t" style="left:828px;top:102px">More Actions</div>
<svg class="a" style="left:969px;top:103px" width="7" height="11" viewBox="0 0 7 11"><path d="M1 0.5 L6 5.5 L1 10.5 Z" fill="#000"/></svg>


<!-- status bar -->
<div class="a" style="left:1px;top:651px;width:984px;height:1px;background:#808080"></div>
<div class="a" style="left:1px;top:652px;width:984px;height:22px;background:#f0edeb;border-top:1px solid #fff;border-bottom:1px solid #fff"></div>
<div class="a" style="left:764px;top:653px;width:1px;height:20px;background:#d5d3d0"></div>
<div class="a" style="left:897px;top:653px;width:1px;height:20px;background:#d5d3d0"></div>
<div class="a" style="left:968px;top:653px;width:1px;height:20px;background:#d5d3d0"></div>

</body></html>
